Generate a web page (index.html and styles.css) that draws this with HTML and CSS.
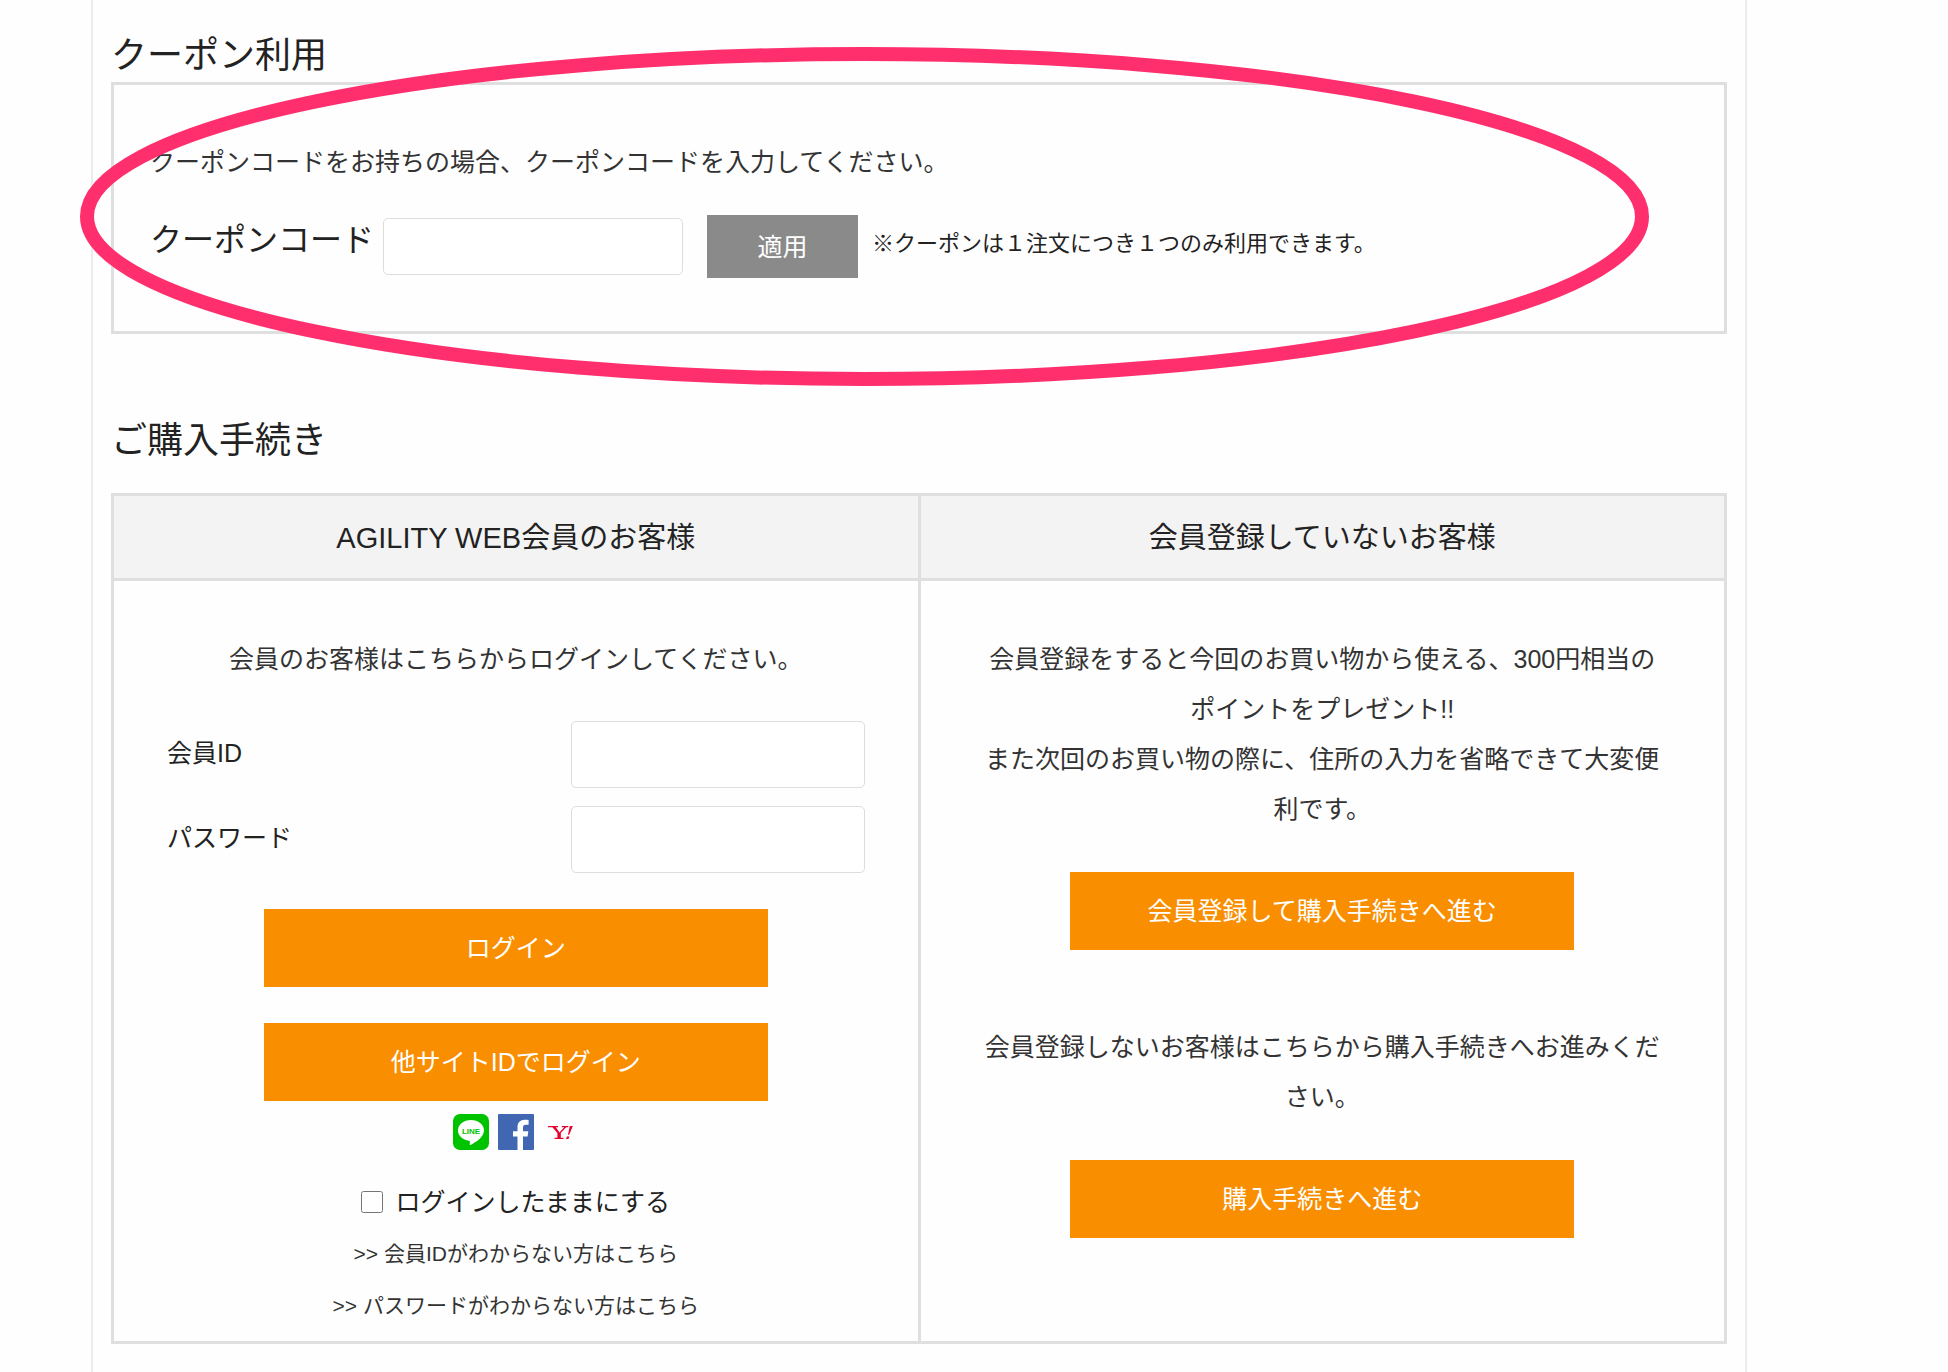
FILE: index.html
```
<!DOCTYPE html>
<html lang="ja">
  <head>
    <meta charset="UTF-8" />
    <meta name="viewport" content="width=device-width, initial-scale=1.0" />
    <title>ご購入手続き</title>
    <link rel="stylesheet" href="styles.css">
  </head>
  <body>
    <main class="container">
      <section class="coupon">
        <h2>クーポン利用</h2>
        <form class="coupon-box" action="#" method="post">
          <p>クーポンコードをお持ちの場合、クーポンコードを入力してください。</p>
          <div class="coupon-row">
            <label for="coupon-code">クーポンコード</label>
            <input type="text" id="coupon-code" name="coupon-code" />
            <button type="submit" class="apply-button">適用</button>
            <span class="note">※クーポンは１注文につき１つのみ利用できます。</span>
          </div>
        </form>
        <svg class="marker" aria-hidden="true">
          <ellipse cx="50%" cy="50%" />
        </svg>
      </section>

      <section class="purchase">
        <h2>ご購入手続き</h2>
        <table>
          <thead>
            <tr>
              <th>AGILITY WEB会員のお客様</th>
              <th>会員登録していないお客様</th>
            </tr>
          </thead>
          <tbody>
            <tr>
              <td>
                <p>会員のお客様はこちらからログインしてください。</p>
                <form class="login" action="#" method="post">
                  <div class="field">
                    <label for="member-id">会員ID</label>
                    <input type="text" id="member-id" name="member-id" />
                  </div>
                  <div class="field">
                    <label for="password">パスワード</label>
                    <input type="password" id="password" name="password" />
                  </div>
                  <button type="submit" class="button">ログイン</button>
                  <button type="button" class="button">他サイトIDでログイン</button>
                  <div class="social">
                    <!-- LINE -->
                    <svg viewBox="0 0 36 36">
                      <rect width="36" height="36" rx="7" fill="#00c300" />
                      <path d="M18 6C10.800 6 5 10.600 5 16.500c0 5.200 4.700 9.500 11 10.300 1 .2 1 .8.900 1.800l-.3 1.700c0 .7.4 1 1.100.6C22 28.500 31 23.500 31 16.500 31 10.600 25.200 6 18 6z" fill="#fff" />
                      <text x="18" y="20" text-anchor="middle" class="line-text">LINE</text>
                    </svg>
                    <!-- Facebook -->
                    <svg viewBox="0 0 36 36">
                      <rect width="36" height="36" rx="1" fill="#4267b2" />
                      <path d="M19.500 36V22.500H15v-5.300h4.500v-4c0-4.700 2.800-7.500 7.100-7.500 1.500 0 3 .1 4 .3v4.700h-2.800c-2.300 0-2.800 1.200-2.800 2.800v3.700h5.300l-.7 5.300H25V36z" fill="#fff" />
                    </svg>
                    <!-- Yahoo! JAPAN -->
                    <svg viewBox="0 0 36 36">
                      <path d="M5 12h10v1.300h-2.200l3.700 5.200 4.700-5.200h-2.400V12h6.500v1.300h-2.200L17.800 19v4.700h2.700V25h-9v-1.300h2.900V19l-5-5.700H5z" fill="#e6002d" />
                      <path d="M26.800 12h3l-3.600 8.800h-1.200zM23.900 22.600h2.500l-.9 2.400h-2.500z" fill="#e6002d" />
                    </svg>
                  </div>
                  <label class="keep">
                    <input type="checkbox" name="keep-login" />
                    ログインしたままにする
                  </label>
                  <a href="#">&gt;&gt; 会員IDがわからない方はこちら</a>
                  <a href="#">&gt;&gt; パスワードがわからない方はこちら</a>
                </form>
              </td>
              <td>
                <p>
                  会員登録をすると今回のお買い物から使える、300円相当のポイントをプレゼント!!<br />また次回のお買い物の際に、住所の入力を省略できて大変便利です。
                </p>
                <button type="button" class="button">会員登録して購入手続きへ進む</button>
                <p class="guest">会員登録しないお客様はこちらから購入手続きへお進みください。</p>
                <button type="button" class="button">購入手続きへ進む</button>
              </td>
            </tr>
          </tbody>
        </table>
      </section>
    </main>
  </body>
</html>
```
FILE: styles.css
```
* {
    box-sizing: border-box;
}
body {
    margin: 0;
    background: #fefefe;
    color: #222;
    font-family: "Liberation Sans", "Noto Sans CJK JP", sans-serif;
    font-size: 25px;
    line-height: 50px;
}
.container {
    min-height: 100vh;
    margin: 0 201px 0 91px;
    padding: 0 18px;
    border: solid #ebebeb;
    border-width: 0 2px;
}
h2 {
    margin: 0;
    font-size: 36px;
    font-weight: normal;
    line-height: 52px;
}
p {
    margin: 0;
    color: #333;
}
input {
    border: 1px solid #ddd;
    border-radius: 5px;
    background: #fff;
    font-size: 25px;
}
button {
    padding: 0 0 4px;
    border: none;
    border-radius: 0;
    color: #fff;
    font-family: inherit;
    font-size: 25px;
    cursor: pointer;
}

/* Coupon */
.coupon {
    position: relative;
    padding-top: 30px;
}
.coupon-box {
    padding: 52px 36px 53px;
    border: 3px solid #dfdfdf;
}
.coupon-row {
    display: flex;
    align-items: center;
    margin-top: 28px;
}
.coupon-row label {
    padding-bottom: 14px;
    font-size: 32px;
    line-height: 48px;
}
.coupon-row input {
    width: 300px;
    height: 57px;
    margin: 0 24px 0 9px;
}
.apply-button {
    width: 151px;
    height: 63px;
    background: #8a8a8a;
}
.note {
    margin-left: 14px;
    padding-bottom: 5px;
    font-size: 22px;
}
/* Hand-drawn style circle around the coupon form */
.marker {
    position: absolute;
    top: 47px;
    left: -31px;
    width: calc(100% - 47px);
    height: 339px;
    pointer-events: none;
}
.marker ellipse {
    rx: calc(50% - 7px);
    ry: calc(50% - 7px);
    fill: none;
    stroke: #ff2f6e;
    stroke-width: 14px;
}

/* Purchase */
.purchase {
    padding: 81px 0 27px;
}
.purchase h2 {
    margin-bottom: 26px;
}
table {
    width: 100%;
    border-collapse: collapse;
    table-layout: fixed;
}
th, td {
    border: 3px solid #dfdfdf;
    text-align: center;
    vertical-align: top;
}
th {
    padding: 17px 16px 15px;
    background: #f3f3f3;
    font-size: 29px;
    font-weight: normal;
}
td {
    padding: 53px 53px 9px;
}
td + td {
    padding: 53px 58px 9px;
}
.button {
    display: block;
    width: 100%;
    max-width: 504px;
    height: 78px;
    margin: 38px auto 0;
    background: #f98e00;
}
.guest {
    margin-top: 72px;
}
.login {
    margin-top: 37px;
}
.login .button {
    margin-top: 36px;
}
.field {
    display: flex;
    justify-content: space-between;
    align-items: center;
}
.field + .field {
    margin-top: 18px;
}
.field label {
    padding-bottom: 4px;
}
.field input {
    width: 294px;
    height: 67px;
}
.social {
    display: flex;
    justify-content: center;
    gap: 9px;
    margin: 13px 0 26px;
}
.social svg {
    width: 36px;
    height: 36px;
}
.line-text {
    fill: #00c300;
    font-family: "Liberation Sans", sans-serif;
    font-size: 8px;
    font-weight: bold;
}
.keep {
    display: flex;
    justify-content: center;
    align-items: center;
    gap: 12px;
    line-height: 52px;
}
.keep input {
    width: 22px;
    height: 22px;
    margin: 0;
}
.login a {
    display: block;
    color: #333;
    font-size: 21px;
    line-height: 52px;
    text-decoration: none;
}
```
